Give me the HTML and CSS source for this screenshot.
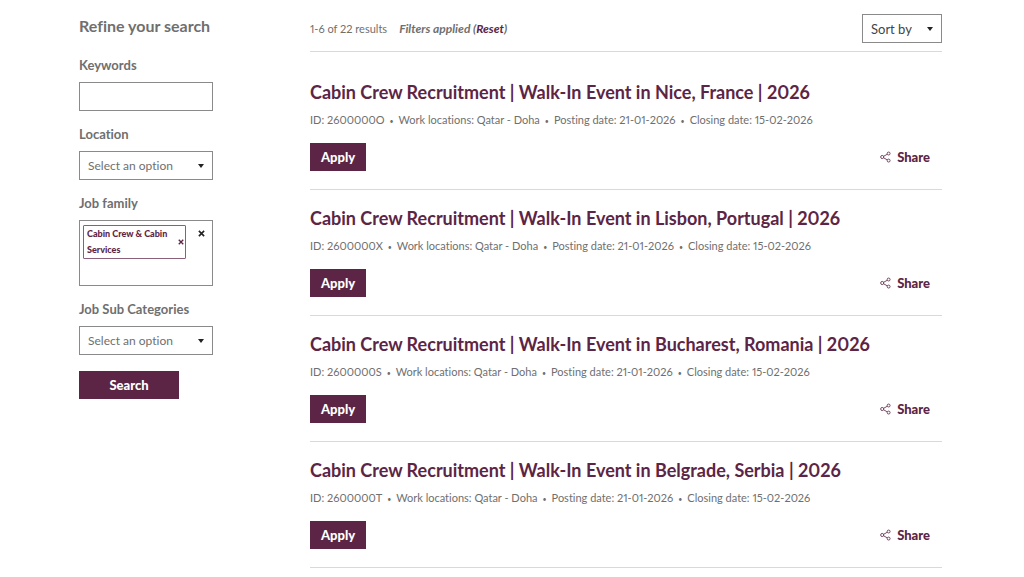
FILE: index.html
```html
<!DOCTYPE html>
<html lang="en">
<head>
<meta charset="utf-8">
<meta name="viewport" content="width=device-width, initial-scale=1">
<title>Job search results</title>
<link rel="stylesheet" href="styles.css">
</head>
<body>
<svg class="sprite" aria-hidden="true">
  <symbol id="share" viewBox="0 0 12 12">
    <g fill="none" stroke="currentColor" stroke-width="0.9">
      <circle cx="2.4" cy="6" r="1.7"/>
      <circle cx="9.4" cy="2.2" r="1.6"/>
      <circle cx="9.4" cy="9.9" r="1.6"/>
      <path d="M4 5.2 7.9 3M4 6.9 7.9 9.1"/>
    </g>
  </symbol>
  <symbol id="cross" viewBox="0 0 8 8">
    <path d="M1 1 7 7M7 1 1 7" fill="none" stroke="currentColor" stroke-width="1.8"/>
  </symbol>
</svg>
<div class="page">
  <form class="filters">
    <h2 class="filters-title">Refine your search</h2>
    <div class="field">
      <label class="label" for="keywords">Keywords</label>
      <input class="control" id="keywords" type="text">
    </div>
    <div class="field">
      <label class="label" for="location">Location</label>
      <span class="select"><select class="control" id="location"><option>Select an option</option></select></span>
    </div>
    <div class="field">
      <span class="label" id="family-label">Job family</span>
      <div class="tokens" role="group" aria-labelledby="family-label">
        <span class="token">
          <span class="token-text">Cabin Crew &amp; Cabin Services</span>
          <button class="token-remove" type="button" aria-label="Remove"><svg class="cross-small"><use href="#cross"/></svg></button>
        </span>
        <button class="clear" type="button" aria-label="Clear all"><svg class="cross"><use href="#cross"/></svg></button>
      </div>
    </div>
    <div class="field">
      <label class="label" for="sub">Job Sub Categories</label>
      <span class="select"><select class="control" id="sub"><option>Select an option</option></select></span>
    </div>
    <button class="search" type="submit">Search</button>
  </form>

  <main class="results">
    <div class="toolbar">
      <span class="count">1-6 of 22 results</span>
      <span class="applied">Filters applied (<a class="reset" href="#">Reset</a>)</span>
      <span class="select sort"><select class="control" aria-label="Sort by"><option>Sort by</option></select></span>
    </div>

    <article class="job">
      <h3 class="job-title"><a href="#">Cabin Crew Recruitment | Walk-In Event in Nice, France | 2026</a></h3>
      <ul class="meta"><li>ID: 2600000O</li><li>Work locations: Qatar - Doha</li><li>Posting date: 21-01-2026</li><li>Closing date: 15-02-2026</li></ul>
      <div class="actions">
        <a class="apply" href="#">Apply</a>
        <button class="share" type="button"><svg class="share-icon"><use href="#share"/></svg>Share</button>
      </div>
    </article>
    <article class="job">
      <h3 class="job-title"><a href="#">Cabin Crew Recruitment | Walk-In Event in Lisbon, Portugal | 2026</a></h3>
      <ul class="meta"><li>ID: 2600000X</li><li>Work locations: Qatar - Doha</li><li>Posting date: 21-01-2026</li><li>Closing date: 15-02-2026</li></ul>
      <div class="actions">
        <a class="apply" href="#">Apply</a>
        <button class="share" type="button"><svg class="share-icon"><use href="#share"/></svg>Share</button>
      </div>
    </article>
    <article class="job">
      <h3 class="job-title"><a href="#">Cabin Crew Recruitment | Walk-In Event in Bucharest, Romania | 2026</a></h3>
      <ul class="meta"><li>ID: 2600000S</li><li>Work locations: Qatar - Doha</li><li>Posting date: 21-01-2026</li><li>Closing date: 15-02-2026</li></ul>
      <div class="actions">
        <a class="apply" href="#">Apply</a>
        <button class="share" type="button"><svg class="share-icon"><use href="#share"/></svg>Share</button>
      </div>
    </article>
    <article class="job">
      <h3 class="job-title"><a href="#">Cabin Crew Recruitment | Walk-In Event in Belgrade, Serbia | 2026</a></h3>
      <ul class="meta"><li>ID: 2600000T</li><li>Work locations: Qatar - Doha</li><li>Posting date: 21-01-2026</li><li>Closing date: 15-02-2026</li></ul>
      <div class="actions">
        <a class="apply" href="#">Apply</a>
        <button class="share" type="button"><svg class="share-icon"><use href="#share"/></svg>Share</button>
      </div>
    </article>
  </main>
</div>
</body>
</html>
```

FILE: styles.css
```css
* { box-sizing: border-box; }

body {
  margin: 0;
  background: #fff;
  color: #6f6f6f;
  font-family: Lato, "Open Sans", sans-serif;
  font-size: 13px;
  font-variant-ligatures: none;
  font-variant-numeric: proportional-nums;
}

a { color: inherit; text-decoration: none; }
button, input, select { font: inherit; }
button { padding: 0; border: 0; background: none; cursor: pointer; }
h2, h3, ul { margin: 0; padding: 0; }
svg { display: block; }
.sprite { display: none; }

.page {
  display: grid;
  grid-template-columns: 134px minmax(0, 1fr);
  gap: 97px;
  padding: 14px 82px 0 79px;
}

/* Filters */
.filters-title { font-size: 16px; line-height: 24px; margin-bottom: 17px; white-space: nowrap; }
.field { margin-bottom: 13px; }
.label {
  display: block;
  margin-bottom: 7px;
  font-weight: 700;
  line-height: 20px;
}

.control {
  display: block;
  width: 100%;
  height: 29px;
  padding: 0 8px;
  border: 1px solid #8a8a8a;
  border-radius: 0;
  background: #fff;
  color: #6f6f6f;
  font-size: 12px;
  appearance: none;
}

.select { display: block; position: relative; }
.select::after {
  content: "";
  position: absolute;
  right: 9px;
  top: 13px;
  border: 3px solid transparent;
  border-top: 4px solid #222;
  border-bottom: 0;
  pointer-events: none;
}

.tokens {
  display: flex;
  align-items: flex-start;
  justify-content: space-between;
  min-height: 66px;
  padding: 4px 7px 4px 3px;
  border: 1px solid #8a8a8a;
}
.token {
  display: flex;
  align-items: center;
  justify-content: space-between;
  width: 103px;
  padding: 0 1px 0 3px;
  border: 1px solid #8b5f79;
  border-radius: 1px;
  color: #5c2545;
}
.token-text { font-size: 9px; font-weight: 900; line-height: 16px; }
.token-remove { flex: none; color: #5c2545; }
.cross-small { width: 6px; height: 6px; }
.clear { padding-top: 5px; color: #222; }
.cross { width: 7px; height: 7px; }

.search {
  width: 100px;
  height: 28px;
  margin-top: 3px;
  background: #5c2545;
  color: #fff;
  font-weight: 900;
}

/* Results */
.toolbar {
  display: flex;
  align-items: center;
  gap: 12px;
  padding-bottom: 8px;
  border-bottom: 1px solid #d9d9d9;
  margin-bottom: 12px;
}
.count { font-size: 11px; }
.applied { font-size: 12px; font-style: italic; font-weight: 700; }
.reset { color: #5c2545; }
.sort { width: 80px; margin-left: auto; }
.sort .control { color: #444; font-size: 13px; }

.job {
  padding: 16px 0 18px;
  border-bottom: 1px solid #d9d9d9;
}
.job-title { color: #5c2545; font-size: 18px; font-weight: 700; line-height: 24px; }
.meta {
  display: flex;
  flex-wrap: wrap;
  margin: 8px 0 14px;
  list-style: none;
  font-size: 11px;
  line-height: 16px;
}
.meta li + li::before { content: "•"; margin: 0 5px; font-size: 7px; }
.actions { display: flex; align-items: center; justify-content: space-between; padding-right: 12px; }
.apply {
  padding: 0 10px;
  border: 1px solid #5c2545;
  background: #5c2545;
  color: #fff;
  font-weight: 900;
  line-height: 26px;
}
.share {
  display: flex;
  align-items: center;
  gap: 6px;
  color: #5c2545;
  font-weight: 900;
  line-height: 20px;
}
.share-icon { width: 11px; height: 12px; }
```
